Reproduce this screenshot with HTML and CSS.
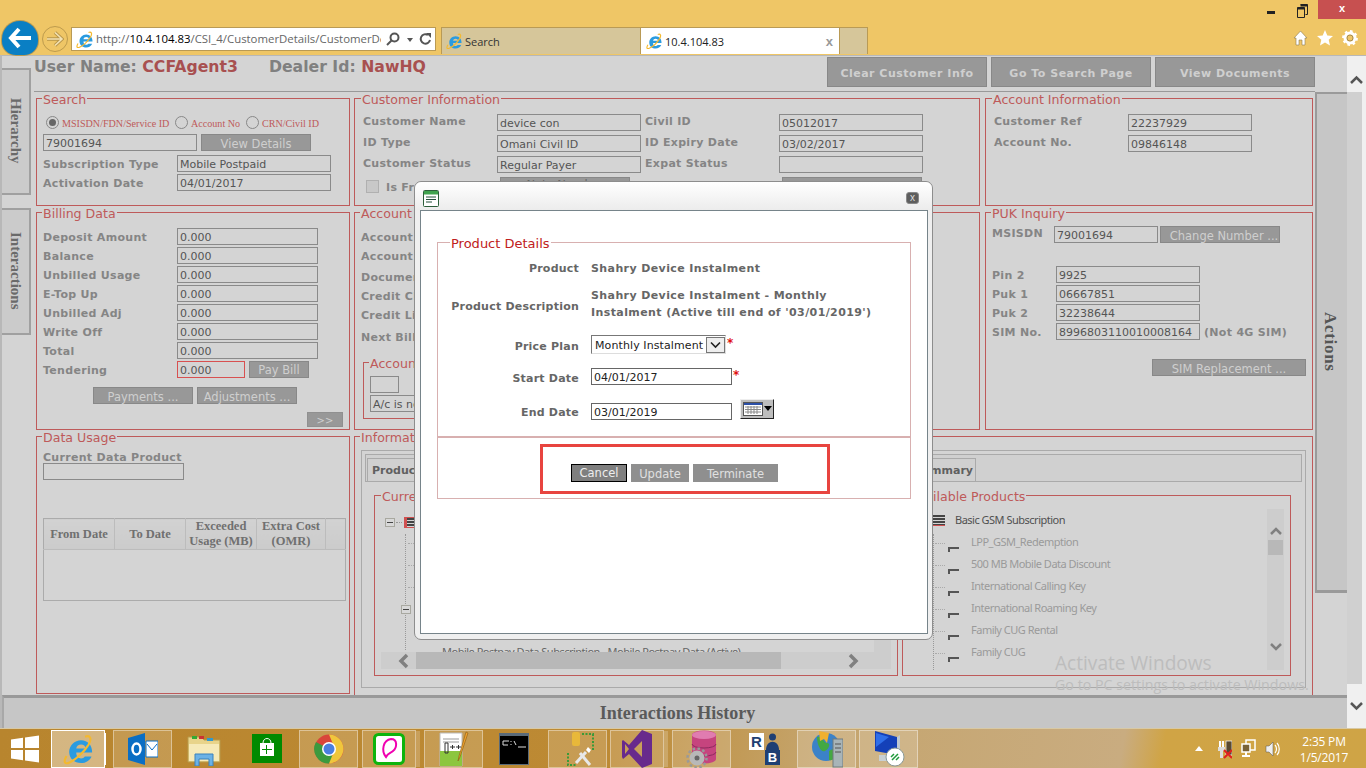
FILE: index.html
```html
<!DOCTYPE html>
<html lang="en">
<head>
<meta charset="utf-8">
<title>Customer Details</title>
<link rel="stylesheet" href="styles.css">
</head>
<body>
<div class="screen">
  <header class="chrome">
    <div class="winbar">
      <svg class="win-ic" width="10" height="4" viewBox="0 0 10 4"><rect x="1" y="0" width="8" height="3" fill="#222"/></svg>
      <svg class="win-ic win-max" width="11" height="14" viewBox="0 0 11 14"><path d="M3.500 .5h7v10h-2M.5 3.500h7v10h-7z" fill="none" stroke="#222"/><path d="M.5 3.500h7v2h-7zM3.500 .5h7v2h-7z" fill="#222"/></svg>
      <div class="win-close">x</div>
    </div>
    <div class="navbar">
      <div class="back"><svg width="24" height="22" viewBox="0 0 24 22"><path d="M11 2 3 11l8 9M3.500 11H23" fill="none" stroke="#fff" stroke-width="4"/></svg></div>
      <div class="fwd"><svg width="18" height="16" viewBox="0 0 18 16"><path d="M9 1.500 16 8l-7 6.500M16 8H1" fill="none" stroke="#B8964A" stroke-width="3.400"/><path d="M9 1.500 16 8l-7 6.500M16 8H1" fill="none" stroke="#F3E2B4" stroke-width="1.600"/></svg></div>
      <div class="addr">
        <svg class="ie" width="17" height="17" viewBox="0 0 34 34"><use href="#ie-mark"/></svg>
        <div class="url">http://<b>10.4.104.83</b>/CSI_4/CustomerDetails/CustomerDe</div>
        <svg class="ic-search" width="14" height="14" viewBox="0 0 14 14"><circle cx="8.500" cy="5.500" r="4" fill="none" stroke="#555" stroke-width="2"/><path d="M5.500 8.500 1 13" stroke="#555" stroke-width="2"/></svg>
        <span class="caret"></span>
        <svg class="ic-refresh" width="13" height="14" viewBox="0 0 13 14"><path d="M11 8a4.700 4.700 0 1 1-2-5" fill="none" stroke="#555" stroke-width="2"/><path d="M7 1h5v5z" fill="#555"/></svg>
      </div>
      <div class="tabs">
        <div class="tab"><svg width="16" height="16" viewBox="0 0 34 34"><use href="#ie-mark"/></svg><span>Search</span></div>
        <div class="tab tab-on"><svg width="16" height="16" viewBox="0 0 34 34"><use href="#ie-mark"/></svg><span>10.4.104.83</span><i class="tab-x">x</i></div>
        <div class="tab tab-new"></div>
      </div>
      <div class="tools">
        <svg width="15" height="16" viewBox="0 0 15 16"><path d="M7.500 1 14 8h-2v7H9v-5H6v5H3V8H1z" fill="#fff" stroke="#8a7a50" stroke-width=".6"/></svg>
        <svg width="16" height="16" viewBox="0 0 16 16"><path d="m8 0 2.300 5.400 5.700.5-4.300 3.800 1.300 5.800L8 12.500 3 15.500l1.300-5.800L0 5.900l5.700-.5z" fill="#fff"/></svg>
        <svg width="16" height="16" viewBox="0 0 16 16"><circle cx="8" cy="8" r="5" fill="none" stroke="#fff" stroke-width="3" /><circle cx="8" cy="8" r="6.800" fill="none" stroke="#fff" stroke-width="2.200" stroke-dasharray="2.600 2.700"/><circle cx="8" cy="8" r="3" fill="none" stroke="#7a6a40" stroke-width=".6"/></svg>
      </div>
    </div>
  </header>

  <main class="page">
    <div class="page-main">
      <div class="upper">
        <nav class="rail">
          <div class="side-tab"><span class="vtext">Hierarchy</span></div>
          <div class="side-tab"><span class="vtext">Interactions</span></div>
        </nav>
        <div class="content">
          <div class="head">
            <div class="who">User Name: <em>CCFAgent3</em><span class="who-gap"></span>Dealer Id: <em>NawHQ</em></div>
            <div class="head-btns">
              <button class="btn btn-top">Clear Customer Info</button>
              <button class="btn btn-top">Go To Search Page</button>
              <button class="btn btn-top">View Documents</button>
            </div>
          </div>
          <div class="grid">
            <section class="panel p-search">
              <h2 class="legend legend-a">Search</h2>
              <div class="radios">
                <span class="radio radio-on"></span><span class="rlabel rl1">MSISDN/FDN/Service ID</span>
                <span class="radio"></span><span class="rlabel rl2">Account No</span>
                <span class="radio"></span><span class="rlabel">CRN/Civil ID</span>
              </div>
              <div class="line"><div class="inp w154">79001694</div><button class="btn w110">View Details</button></div>
              <div class="line mt4"><span class="lbl l134">Subscription Type</span><div class="inp w154">Mobile Postpaid</div></div>
              <div class="line mt2"><span class="lbl l134">Activation Date</span><div class="inp w154">04/01/2017</div></div>
            </section>

            <section class="panel p-cust">
              <h2 class="legend">Customer Information</h2>
              <div class="cust-grid">
                <span class="lbl">Customer Name</span><div class="inp">device con</div><span class="lbl">Civil ID</span><div class="inp">05012017</div>
                <span class="lbl">ID Type</span><div class="inp">Omani Civil ID</div><span class="lbl">ID Expiry Date</span><div class="inp">03/02/2017</div>
                <span class="lbl">Customer Status</span><div class="inp">Regular Payer</div><span class="lbl">Expat Status</span><div class="inp"></div>
              </div>
              <div class="line cust-foot">
                <span class="check"></span><span class="lbl l114">Is Free</span>
                <button class="btn w130 btn-up">Note Number</button>
                <button class="btn w140 ml152"></button>
              </div>
            </section>

            <section class="panel p-acct">
              <h2 class="legend">Account Information</h2>
              <div class="acct-grid">
                <span class="lbl">Customer Ref</span><div class="inp">22237929</div>
                <span class="lbl">Account No.</span><div class="inp">09846148</div>
              </div>
            </section>

            <section class="panel p-bill">
              <h2 class="legend legend-a">Billing Data</h2>
              <div class="bill-grid">
                <span class="lbl">Deposit Amount</span><div class="inp">0.000</div>
                <span class="lbl">Balance</span><div class="inp">0.000</div>
                <span class="lbl">Unbilled Usage</span><div class="inp">0.000</div>
                <span class="lbl">E-Top Up</span><div class="inp">0.000</div>
                <span class="lbl">Unbilled Adj</span><div class="inp">0.000</div>
                <span class="lbl">Write Off</span><div class="inp">0.000</div>
                <span class="lbl">Total</span><div class="inp">0.000</div>
                <span class="lbl">Tendering</span>
                <div class="line"><div class="inp inp-red">0.000</div><button class="btn w60">Pay Bill</button></div>
              </div>
              <div class="bill-btns"><button class="btn w100">Payments ...</button><button class="btn w100">Adjustments ...</button></div>
              <div class="bill-more"><button class="btn btn-more">&gt;&gt;</button></div>
            </section>

            <section class="panel p-acc2">
              <h2 class="legend legend-a">Account Details</h2>
              <div class="acc2-list">
                <span class="lbl">Account Type</span>
                <span class="lbl">Account Status</span>
                <span class="lbl mt2">Document No</span>
                <span class="lbl">Credit Class</span>
                <span class="lbl">Credit Limit</span>
                <span class="lbl mt3">Next Bill Date</span>
              </div>
              <div class="panel acc-sub">
                <h2 class="legend legend-a">Account Status</h2>
                <div class="inp w29"></div>
                <div class="inp w200 mt2">A/c is not barred</div>
              </div>
            </section>

            <section class="panel p-puk">
              <h2 class="legend legend-a">PUK Inquiry</h2>
              <div class="line puk-top"><span class="lbl l62">MSISDN</span><div class="inp w104">79001694</div><button class="btn w120">Change Number ...</button></div>
              <div class="puk-grid">
                <span class="lbl">Pin 2</span><div class="inp">9925</div><span></span>
                <span class="lbl">Puk 1</span><div class="inp">06667851</div><span></span>
                <span class="lbl">Puk 2</span><div class="inp">32238644</div><span></span>
                <span class="lbl">SIM No.</span><div class="inp">8996803110010008164</div><span class="lbl note">(Not 4G SIM)</span>
              </div>
              <div class="puk-sim"><button class="btn w154">SIM Replacement ...</button></div>
            </section>

            <section class="panel p-data">
              <h2 class="legend legend-a">Data Usage</h2>
              <span class="lbl lbl-block">Current Data Product</span>
              <div class="inp w141"></div>
              <table class="dtable">
                <thead><tr><th>From Date</th><th>To Date</th><th>Exceeded Usage (MB)</th><th>Extra Cost (OMR)</th><th></th></tr></thead>
                <tbody><tr><td colspan="5"></td></tr></tbody>
              </table>
            </section>

            <section class="panel p-info">
              <h2 class="legend legend-a">Information</h2>
              <div class="tabbox">
                <div class="tabstrip">
                  <div class="strip-tab">Products</div>
                  <div class="strip-tab strip-end">Summary</div>
                </div>
                <div class="prod-row">
                  <div class="panel p-cur">
                    <h2 class="legend">Current Products</h2>
                    <div class="cur-body">
                      <div class="cur-view">
                        <div class="cur-tree">
                          <div class="t-head"><span class="minus"></span><span class="dots-h"></span><span class="prod-ic"></span></div>
                          <div class="t-stem">
                            <span class="twig"></span><span class="twig"></span><span class="twig"></span>
                            <span class="minus minus-2"></span>
                          </div>
                          <div class="t-last">Mobile Postpay Data Subscription - Mobile Postpay Data (Active)</div>
                        </div>
                        <div class="cur-vbar"></div>
                      </div>
                      <div class="hbar">
                        <svg class="chev" width="14" height="16" viewBox="0 0 14 16"><path d="M10 2 4 8l6 6" fill="none" stroke="#808080" stroke-width="3.500"/></svg>
                        <span class="hthumb"></span>
                        <svg class="chev" width="14" height="16" viewBox="0 0 14 16"><path d="m4 2 6 6-6 6" fill="none" stroke="#808080" stroke-width="3.500"/></svg>
                      </div>
                    </div>
                  </div>
                  <div class="panel p-avail">
                    <h2 class="legend">Available Products</h2>
                    <div class="avail-body">
                      <ul class="tree">
                        <li class="t-root"><span class="prod-ic2"></span>Basic GSM Subscription</li>
                        <li class="leaf">LPP_GSM_Redemption</li>
                        <li class="leaf">500 MB Mobile Data Discount</li>
                        <li class="leaf">International Calling Key</li>
                        <li class="leaf">International Roaming Key</li>
                        <li class="leaf">Family CUG Rental</li>
                        <li class="leaf">Family CUG</li>
                      </ul>
                      <div class="vbar">
                        <svg width="14" height="10" viewBox="0 0 14 10"><path d="m2 8 5-5 5 5" fill="none" stroke="#808080" stroke-width="2.500"/></svg>
                        <span class="vthumb"></span>
                        <svg class="vdown" width="14" height="10" viewBox="0 0 14 10"><path d="m2 2 5 5 5-5" fill="none" stroke="#808080" stroke-width="2.500"/></svg>
                      </div>
                    </div>
                  </div>
                </div>
              </div>
            </section>
          </div>
        </div>
        <aside class="actions"><span class="vtext vtext-a">Actions</span></aside>
      </div>
      <div class="history">Interactions History</div>
    </div>
    <div class="pagebar">
      <div class="pb-end"><svg width="15" height="10" viewBox="0 0 15 10"><path d="m2 8 5.500-5.500L13 8" fill="none" stroke="#555" stroke-width="2.500"/></svg></div>
      <div class="pb-thumb"></div>
      <div class="pb-end pb-down"><svg width="15" height="10" viewBox="0 0 15 10"><path d="m2 2 5.500 5.500L13 2" fill="none" stroke="#555" stroke-width="2.500"/></svg></div>
    </div>
  </main>

  <footer class="taskbar">
    <svg class="start" width="30" height="30" viewBox="0 0 30 30"><path d="M1 5.500 13 3.800V14H1zM15 3.500 29 1.500V14H15zM1 16h12v10.300L1 24.500zM15 16h14v12.500L15 26.500z" fill="#fff"/></svg>
    <div class="task t-ie on"><svg width="30" height="32" viewBox="0 0 34 34"><use href="#ie-mark"/></svg></div>
    <div class="task t-ol"><svg width="30" height="34" viewBox="0 0 30 34"><path d="M0 6 17 1v32L0 28z" fill="#0A6EC4"/><path d="M18 9h12v16H18z" fill="#fff" stroke="#0A6EC4"/><path d="m19 12 5 6 5-6" fill="none" stroke="#0A6EC4"/><ellipse cx="8.500" cy="17" rx="4" ry="5.500" fill="none" stroke="#fff" stroke-width="2.500"/></svg></div>
    <div class="plain t-ex"><svg width="34" height="34" viewBox="0 0 34 34"><path d="M1 5h14l2 3h16v22H1z" fill="#E8D48A" stroke="#B79A4A"/><path d="M2 12h30v17H2z" fill="#F6EAB8"/><rect x="5" y="4" width="5" height="3" fill="#3A3"/><rect x="12" y="4" width="5" height="3" fill="#C33"/><rect x="20" y="6" width="6" height="3" fill="#39C"/><path d="M8 22h18v12h-4v-7H12v7H8z" fill="#6BB2E6" stroke="#3A82BC"/></svg></div>
    <div class="plain t-st"><svg width="30" height="29" viewBox="0 0 30 29"><rect width="30" height="29" fill="#008A00"/><path d="M8 9h14v13H8z" fill="#fff"/><path d="M11 9c0-6 8-6 8 0" fill="none" stroke="#fff"/><path d="M14.500 11v9M10 15.500h10" stroke="#008A00"/></svg></div>
    <div class="task t-ch"><svg width="30" height="40" viewBox="0 0 30 40"><circle cx="15" cy="20" r="14.500" fill="#D9453A"/><path d="M15 20 2 13A14.500 14.500 0 0 0 15 34.500l4-5z" fill="#3C9A3E"/><path d="M15 5.500A14.500 14.500 0 0 1 29.500 20c0 6-5 14.500-14.500 14.500L21 20z" fill="#F0C63C"/><circle cx="15" cy="20" r="7" fill="#fff"/><circle cx="15" cy="20" r="5.500" fill="#4A7FE0"/></svg></div>
    <div class="task t-qu"><svg width="32" height="32" viewBox="0 0 32 32"><rect x="1.500" y="1.500" width="29" height="29" rx="4" fill="#fff" stroke="#0DB40D" stroke-width="3"/><path d="M13 24c-5-6-3-17 5-18 7 0 6 9 2 12-2 2-5 2-7 6z" fill="none" stroke="#F000B0" stroke-width="2"/></svg></div>
    <div class="task t-np"><svg width="32" height="36" viewBox="0 0 32 36"><path d="M2 2h22v33H2z" fill="#fff" stroke="#bbb"/><path d="M2 20h22v15H2z" fill="#8CC63F"/><path d="M5 8h16M5 11h16" stroke="#999"/><path d="M7 12v10h3V12z" fill="none" stroke="#333"/><path d="M12 16h5M14.500 14v4M18 16h5M20.500 14v4" stroke="#333"/><path d="m30 2-8 24-2 4 1-5 7-24z" fill="#F2A32E" stroke="#8a5a10" stroke-width=".6"/></svg></div>
    <div class="plain t-cm"><svg width="30" height="32" viewBox="0 0 30 32"><rect width="30" height="32" fill="#5A6A78"/><rect x="1" y="3" width="28" height="28" fill="#000"/><path d="M4 8h6M4 8v4h5M12 8v1M12 11v1M15 8l2 4M19 14h8" stroke="#ddd"/></svg></div>
    <div class="task t-ss"><svg width="32" height="40" viewBox="0 0 32 40"><rect x="10" y="3" width="8" height="14" rx="2" fill="#E8B83A"/><path d="M20 5h12M31 5v17M6 24v12h8" stroke="#3A9A3A" stroke-width="2" stroke-dasharray="2 1.500" fill="none"/><path d="m14 34 10-11M28 36 18 24" stroke="#E8E8E8" stroke-width="3"/><path d="m26 18 3 3-2 3-3-3z" fill="#fff"/></svg></div>
    <div class="task t-vs"><svg width="30" height="38" viewBox="0 0 30 38"><path d="M20 0 30 4v30l-10 4L7 24l-6 5-1-2V11l1-1 6 5zM20 11l-8 8 8 8zM3 14v10l4-5z" fill="#682A8C"/></svg></div>
    <div class="task t-db"><svg width="32" height="38" viewBox="0 0 32 38"><path d="M6 5a12 4.500 0 0 1 24 0v24a12 4.500 0 0 1-24 0z" fill="#C6447E"/><ellipse cx="18" cy="5" rx="12" ry="4" fill="#E07CB0"/><path d="M6 14a12 4 0 0 0 24 0M6 22a12 4 0 0 0 24 0" fill="none" stroke="#8E2A5E"/><circle cx="11" cy="28" r="7.500" fill="#B8B8B8"/><circle cx="11" cy="28" r="9.500" fill="none" stroke="#999" stroke-width="2.500" stroke-dasharray="2.500 2.500"/><circle cx="11" cy="28" r="2.500" fill="#666"/></svg></div>
    <div class="plain t-rb"><div class="rb"><span class="rb-r">R</span><svg width="13" height="17" viewBox="0 0 13 17"><circle cx="6.500" cy="4" r="3.500" fill="#1F3F73"/><path d="M0 17c0-11 13-11 13 0z" fill="#1F3F73"/></svg></div><span class="rb-b">B</span></div>
    <div class="task t-gl"><svg width="32" height="40" viewBox="0 0 32 40"><circle cx="15" cy="18" r="14" fill="#3B82C8"/><path d="M6 8c6-2 6 6 10 6s2 6-2 8-8-6-8-14zM18 22c4-3 8-2 8 2s-4 8-8 7z" fill="#43A843"/><path d="m8 2 10 2-2 10-3-4-4 2z" fill="#F0B030"/><rect x="22" y="10" width="10" height="28" fill="#A8B4B8" stroke="#6E7A7E"/><path d="M24 15h6M24 19h6M24 23h6" stroke="#555"/></svg></div>
    <div class="task t-rd"><svg width="32" height="40" viewBox="0 0 32 40"><path d="M2 2 24 8v18L2 22z" fill="#1440B8"/><path d="M3 4 16 8 3 18z" fill="#2F6EE8"/><path d="M24 8l3-2v19l-3 2z" fill="#BFC8D0"/><path d="M6 26h14v6H6z" fill="#C8D0D4"/><circle cx="22" cy="28" r="9" fill="#fff" stroke="#8a9a9a"/><path d="m18 28 3-3M26 28l-3 3M19 31l6-6" stroke="#1E9A3A" stroke-width="1.500"/></svg></div>
    <div class="tray">
      <span class="tray-up"></span>
      <svg width="15" height="20" viewBox="0 0 15 20"><path d="M2 2h2v6H2zM5 2h2v6H5z" fill="#fff"/><path d="M1 8h7v4H1zM3 12h3v7H3z" fill="#ddd"/><rect x="9" y="2" width="6" height="14" fill="#5a4a30" stroke="#fff" stroke-width=".7"/><path d="m7 11 8 8M15 11l-8 8" stroke="#E02020" stroke-width="2"/></svg>
      <svg width="15" height="20" viewBox="0 0 15 20"><path d="M5 1h9v10H5z" fill="none" stroke="#fff" stroke-width="1.500"/><path d="M1 5h8v8H1z" fill="#7a6236" stroke="#fff" stroke-width="1.500"/><path d="M5 13v3M1 17h8" stroke="#fff" stroke-width="2"/></svg>
      <svg width="15" height="18" viewBox="0 0 15 18"><path d="M1 6h3l4-4v14l-4-4H1z" fill="#eee" stroke="#555" stroke-width=".5"/><path d="M10 5c2 2 2 6 0 8M12 3c3 3 3 9 0 12" fill="none" stroke="#fff" stroke-width="1.200"/></svg>
      <div class="clock"><div>2:35 PM</div><div>1/5/2017</div></div>
    </div>
  </footer>

  <div class="watermark">
    <div class="wm1">Activate Windows</div>
    <div class="wm2">Go to PC settings to activate Windows.</div>
  </div>

  <div class="modal" role="dialog">
    <div class="modal-bar">
      <svg width="16" height="17" viewBox="0 0 16 17"><rect x=".5" y=".5" width="15" height="16" rx="1" fill="#fff" stroke="#2C5E3A"/><rect x="1" y="1" width="14" height="3.500" fill="#3FA34D"/><path d="M3 7h10M3 9.500h10M3 12h6" stroke="#24503A"/></svg>
      <span class="modal-x">x</span>
    </div>
    <div class="modal-body">
      <div class="mset">
        <h2 class="mlegend">Product Details</h2>
        <div class="mform">
          <div class="mrow mr1"><span class="mlbl">Product</span><span class="mval">Shahry Device Instalment</span></div>
          <div class="mrow mr2"><span class="mlbl">Product Description</span><span class="mval mdesc">Shahry Device Instalment - Monthly Instalment (Active till end of '03/01/2019')</span></div>
          <div class="mrow mr3"><span class="mlbl">Price Plan</span><div class="msel"><span>Monthly Instalment</span><i class="msel-btn"><svg width="11" height="8" viewBox="0 0 11 8"><path d="m1 1.500 4.500 4.500L10 1.500" fill="none" stroke="#222" stroke-width="1.600"/></svg></i></div><span class="star">*</span></div>
          <div class="mrow mr4"><span class="mlbl">Start Date</span><div class="minp">04/01/2017</div><span class="star star-2">*</span></div>
          <div class="mrow mr5"><span class="mlbl">End Date</span><div class="minp">03/01/2019</div>
            <div class="cal"><svg width="20" height="14" viewBox="0 0 20 14"><rect x=".5" y=".5" width="19" height="13" fill="#fff" stroke="#555"/><rect x="1" y="1" width="18" height="2" fill="#2B4FA8"/><path d="M2 5h16M2 7.500h16M2 10h16M5 4v8M8 4v8M11 4v8M14 4v8" stroke="#8a8a8a"/></svg><svg width="8" height="5" viewBox="0 0 8 5"><path d="M0 0h8L4 5z" fill="#000"/></svg></div>
          </div>
        </div>
        <div class="mfoot">
          <div class="redbox">
            <button class="mbtn mbtn-on">Cancel</button>
            <button class="mbtn w58">Update</button>
            <button class="mbtn w85">Terminate</button>
          </div>
        </div>
      </div>
    </div>
  </div>

  <svg class="defs" width="0" height="0" aria-hidden="true"><defs>
    <g id="ie-mark">
      <path d="M24.500 21h8.500c.4-8-5-14-12.500-14C13 7 7 13 7 20.500S13 33 20.500 33c5.500 0 10-3 11.800-7.500h-7.500c-1 1.500-2.500 2.200-4.300 2.200-3.300 0-5.500-2.600-5.500-6.700zM15 16.500c.4-2.800 2.600-4.500 5.500-4.500s5 1.700 5.200 4.500z" fill="#2A9BE0"/>
      <path d="M4 25C0 32 2 35 8 32c7-3.500 16-12 21-20 4-7 2-11-4-9" fill="none" stroke="#F4B92E" stroke-width="2.400"/>
    </g>
  </defs></svg>
</div>
</body>
</html>
```
FILE: styles.css
```css
* { box-sizing: border-box; }
html, body { margin: 0; padding: 0; }
body { width: 1366px; height: 768px; overflow: hidden; background: #d4d4d4; font-family: "DejaVu Sans", Verdana, sans-serif; }
button { font-family: inherit; margin: 0; }
h2, ul { margin: 0; padding: 0; font-weight: normal; }
.defs { position: absolute; }

.screen { position: relative; width: 1366px; height: 768px; display: flex; flex-direction: column; overflow: hidden; }

/* browser chrome */
.chrome { height: 55px; flex: none; background: #efc666; display: flex; flex-direction: column; }
.winbar { height: 27px; display: flex; justify-content: flex-end; align-items: flex-start; }
.win-ic { margin-top: 11px; margin-right: 21px; }
.win-max { margin-top: 4px; margin-right: 10px; }
.win-close { width: 48px; height: 19px; background: #c75050; color: #fff; text-align: center; font: bold 11px/17px "Liberation Sans", sans-serif; }
.navbar { height: 28px; display: flex; position: relative; }
.back { position: absolute; left: 2px; top: -6px; width: 36px; height: 34px; border-radius: 18px 18px 14px 14px; background: #0a7fc4; display: flex; align-items: center; justify-content: center; box-shadow: 0 0 0 1px #b69a55; }
.fwd { position: absolute; left: 42px; top: -1px; width: 26px; height: 26px; border-radius: 50%; border: 1px solid #bd9b4d; display: flex; align-items: center; justify-content: center; }
.addr { margin-left: 71px; width: 365px; height: 24px; background: #fff; border: 1px solid #b99a55; display: flex; align-items: center; position: relative; }
.ie { margin-left: 4px; flex: none; }
.url { margin-left: 3px; width: 285px; flex: none; overflow: hidden; white-space: nowrap; font: 11.400px/20px "Open Sans", sans-serif; color: #666; }
.url b { font-weight: 400; color: #000; }
.ic-search { margin-left: 5px; flex: none; }
.caret { width: 0; height: 0; border: 3px solid transparent; border-top: 4px solid #555; margin: 4px 0 0 7px; flex: none; }
.ic-refresh { margin-left: 6px; flex: none; }
.tabs { margin-left: 5px; width: 427px; height: 27px; display: flex; }
.tab { width: 200px; height: 27px; background: #d6c69a; border: 1px solid #b99a55; border-bottom: 0; display: flex; align-items: center; gap: 3px; padding-left: 4px; font: 11px "Open Sans", sans-serif; color: #333; }
.tab + .tab { border-left: 0; }
.tab-on { width: 199px; background: #fff; padding-left: 5px; color: #222; position: relative; }
.tab-x { position: absolute; right: 6px; top: 6px; font: bold 13px "Liberation Sans", sans-serif; color: #999; }
.tab-new { width: 28px; padding: 0; }
.tools { margin-left: auto; display: flex; gap: 9px; padding: 3px 8px 0 0; }

/* page */
.page { height: 673px; flex: none; display: flex; border-top: 1px solid #b8b8b8; background: #d4d4d4; }
.page-main { width: 1347px; flex: none; display: flex; flex-direction: column; border-left: 2px solid #b8b8b8; }
.upper { height: 639px; flex: none; display: flex; overflow: hidden; }
.rail { width: 32px; flex: none; padding-top: 12px; display: flex; flex-direction: column; gap: 13px; }
.side-tab { width: 29px; height: 127px; background: #cbcbcb; border: 2px solid #a0a0a0; border-left: 0; display: flex; align-items: flex-start; justify-content: center; padding-top: 28px; }
.side-tab + .side-tab { padding-top: 22px; }
.vtext { writing-mode: vertical-rl; font: bold 15px "Liberation Serif", serif; color: #6a6a6a; }

.content { width: 1281px; flex: none; }
.head { height: 36px; border-bottom: 1px solid #999; display: flex; justify-content: space-between; }
.who { font-size: 15.700px; font-weight: bold; color: #808080; line-height: 20px; margin-top: 1px; white-space: nowrap; }
.who em { font-style: normal; color: #a85050; }
.who-gap { display: inline-block; width: 31px; }
.head-btns { display: flex; gap: 4px; padding-top: 1px; }
.btn { height: 17px; padding: 2px 0 0; border: 1px solid #888; background: #989898; color: #cfcfcf; font-size: 11.500px; line-height: 14px; text-align: center; white-space: nowrap; }
.btn-top { width: 160px; height: 30px; padding-top: 4px; font-weight: bold; font-size: 11px; letter-spacing: .5px; }
.btn-up { padding: 0 0 6px; color: #666; }

.grid { display: grid; grid-template-columns: 314px 626px 329px; grid-template-rows: 108px 218px 270px; column-gap: 4px; row-gap: 6px; margin: 6px 0 0 2px; }
.p-acct { margin-left: 1px; }
.p-puk { margin-left: 1px; }
.panel { position: relative; border: 1px solid #be5a5a; min-width: 0; }
.legend { position: absolute; left: 6px; top: -7px; background: #d4d4d4; padding: 0 1px; font: 12.600px/16px "DejaVu Sans", sans-serif; color: #be5a5a; white-space: nowrap; }
.legend-a { left: 5px; }
.lbl { height: 17px; font-size: 11px; font-weight: bold; color: #858585; line-height: 19px; white-space: nowrap; letter-spacing: .3px; }
.inp { height: 17px; border: 1px solid #8a8a8a; padding-left: 2px; font-size: 11px; line-height: 17px; color: #555; white-space: nowrap; overflow: hidden; }
.line { display: flex; align-items: flex-start; }
.mt2 { margin-top: 2px; }
.mt3 { margin-top: 3px; }
.mt4 { margin-top: 4px; }
.w29 { width: 29px; }
.w60 { width: 60px; }
.w100 { width: 100px; }
.w104 { width: 104px; }
.w110 { width: 110px; margin-left: 4px; }
.w120 { width: 120px; margin-left: 2px; padding-left: 8px; }
.w130 { width: 130px; margin-top: -1px; }
.w140 { width: 140px; margin-top: -1px; }
.w141 { width: 141px; }
.w154 { width: 154px; }
.w200 { width: 200px; }
.l134 { width: 134px; flex: none; }
.l114 { width: 114px; flex: none; }
.l62 { width: 62px; flex: none; line-height: 15px; }
.ml152 { margin-left: 152px; }

/* search */
.p-search { padding: 15px 6px 0; }
.radios { height: 20px; display: flex; align-items: flex-start; margin-left: 3px; font: 10px "Liberation Serif", serif; color: #be5a5a; }
.radio { width: 13px; height: 13px; border: 1px solid #888; border-radius: 50%; margin-top: 2px; flex: none; background: #d4d4d4; position: relative; }
.radio-on::after { content: ""; position: absolute; left: 2px; top: 2px; width: 7px; height: 7px; border-radius: 50%; background: #666; }
.rlabel { margin: 4px 0 0 3px; font-size: 10.100px; white-space: nowrap; width: 58px; }
.rl1 { width: 113px; }
.rl2 { width: 55px; }

/* customer */
.p-cust { padding: 15px 8px 0; }
.cust-grid { display: grid; grid-template-columns: 134px 144px 138px 144px; grid-auto-rows: 17px; row-gap: 4px; }
.cust-grid .lbl:nth-child(4n+3) { padding-left: 4px; }
.cust-grid .lbl, .acct-grid .lbl { line-height: 15px; }
.cust-foot { margin-top: 5px; padding-left: 3px; }
.check { width: 13px; height: 13px; border: 1px solid #b0b0b0; background: #c8c8c8; margin: 2px 7px 0 0; flex: none; }
.p-acct { padding: 15px 8px 0; }
.acct-grid { display: grid; grid-template-columns: 134px 124px; grid-auto-rows: 17px; row-gap: 4px; }

/* billing */
.p-bill { padding: 15px 6px 0; }
.bill-grid { display: grid; grid-template-columns: 134px 141px; grid-auto-rows: 17px; row-gap: 2px; }
.inp-red { width: 68px; border-color: #d85050; }
.bill-grid .btn { margin-left: 4px; padding-top: 0; }
.bill-btns { display: flex; gap: 4px; padding-left: 50px; margin-top: 9px; }
.bill-more { display: flex; justify-content: flex-end; padding: 8px 0 0; }
.btn-more { width: 36px; height: 15px; border: 1px solid #909090; font-size: 10px; line-height: 11px; }

/* account 2 */
.p-acc2 { padding: 15px 6px 0; }
.acc2-list { display: flex; flex-direction: column; gap: 2px; }
.acc-sub { margin: 17px 0 0 2px; width: 400px; height: 57px; padding: 13px 6px 0; }

/* puk */
.p-puk { padding: 13px 6px 0; }
.puk-grid { display: grid; grid-template-columns: 64px 144px auto; justify-content: start; grid-auto-rows: 17px; row-gap: 2px; margin-top: 23px; }
.note { padding-left: 4px; }
.puk-sim { display: flex; justify-content: flex-end; margin-top: 19px; }

/* data usage */
.p-data { padding: 15px 6px 0; height: 258px; }
.lbl-block { display: block; height: 12px; margin-top: -1px; line-height: 14px; }
.dtable { width: 302px; height: 83px; margin-top: 38px; border-collapse: collapse; border: 1px solid #ababab; table-layout: fixed; font: bold 12.500px/15px "Liberation Serif", serif; color: #707070; }
.dtable th { height: 31px; border-right: 1px solid #bcbcbc; border-bottom: 1px solid #bcbcbc; padding: 0 1px; background: linear-gradient(#d2d2d2, #cbcbcb); width: 71px; font-weight: bold; }
.dtable th:nth-child(4) { width: 69px; }
.dtable th:last-child { width: 20px; border-right: 0; }

/* information */
.p-info { grid-column: 2 / span 2; padding: 13px 6px 0; }
.tabbox { border: 1px solid #aaa; height: 238px; width: 945px; padding: 3px; }
.tabstrip { height: 28px; border: 1px solid #aaa; display: flex; background: #d0d0d0; font-size: 11px; font-weight: bold; color: #606060; padding: 3px 0 0 1px; }
.strip-tab { width: 100px; height: 24px; border: 1px solid #aaa; border-bottom: 0; line-height: 24px; padding-left: 4px; }
.strip-end { margin-left: 362px; width: 147px; text-align: right; padding-right: 2px; border-left: 0; }
.prod-row { display: flex; gap: 4px; margin: 13px 0 0 9px; }
.p-cur { width: 524px; height: 181px; }
.p-avail { width: 389px; height: 181px; }
.cur-body { position: absolute; inset: 13px 6px 6px 6px; display: flex; flex-direction: column; }
.cur-view { height: 143px; display: flex; }
.cur-tree { flex: 1; position: relative; overflow: hidden; padding: 8px 0 0 4px; }
.cur-vbar { width: 17px; background: #cdcdcd; }
.t-head { display: flex; align-items: center; height: 10px; }
.minus { width: 10px; height: 9px; border: 1px solid #a8a8a0; background: #d8d8d8; position: relative; flex: none; }
.minus::after { content: ""; position: absolute; left: 1px; right: 1px; top: 3px; height: 1px; background: #444; }
.dots-h { width: 6px; border-top: 1px dotted #999; margin: 0 2px 0 1px; }
.prod-ic { width: 12px; height: 11px; flex: none; border: 1px solid #d05050; border-left-width: 3px; background: repeating-linear-gradient(#444 0 2px, #d4d4d4 2px 3px); }
.t-stem { position: relative; margin: 7px 0 0 20px; width: 10px; height: 116px; border-left: 1px dotted #999; padding-top: 9px; }
.twig { display: block; width: 6px; height: 22px; margin-left: 2px; border-top: 1px dotted #aaa; }
.minus-2 { position: absolute; left: -5px; top: 71px; }
.t-last { position: absolute; left: 61px; bottom: -8px; height: 16px; font: 11px/16px "Noto Sans", sans-serif; letter-spacing: -.5px; color: #666; white-space: nowrap; }
.hbar { height: 17px; display: flex; align-items: center; background: #cdcdcd; padding-left: 16px; }
.hthumb { width: 365px; height: 17px; background: #b8b8b8; margin: 0 65px 0 5px; flex: none; }
.avail-body { position: absolute; inset: 13px 6px 5px 0; display: flex; }
.tree { flex: 1; list-style: none; font: 11px/22px "Noto Sans", sans-serif; letter-spacing: -.5px; color: #9a9a9a; white-space: nowrap; position: relative; }
.tree::after { content: ""; position: absolute; left: 30px; top: 25px; bottom: 0; border-left: 1px dotted #999; }
.tree li { height: 22px; position: relative; }
.t-root { padding-left: 52px; color: #505050; }
.prod-ic2 { position: absolute; left: 30px; top: 6px; width: 12px; height: 11px; border-bottom: 1px solid #d05050; background: repeating-linear-gradient(#444 0 2px, #d4d4d4 2px 3px); }
.leaf { padding-left: 68px; }
.leaf::before { content: ""; position: absolute; left: 32px; top: 12px; width: 10px; border-top: 1px dotted #aaa; }
.leaf::after { content: ""; position: absolute; left: 45px; top: 16px; width: 9px; height: 3px; border-top: 2px solid #555; border-left: 2px solid #555; }
.vbar { width: 17px; background: #cdcdcd; display: flex; flex-direction: column; align-items: center; padding-top: 17px; }
.vthumb { width: 15px; height: 15px; background: #b8b8b8; margin-top: 4px; }
.vdown { margin-top: 87px; }

/* actions + page scrollbar */
.actions { width: 32px; height: 501px; margin-top: 36px; flex: none; margin-left: 0; background: #c6c6c6; border: 2px solid #9a9a9a; border-right: 0; border-bottom-width: 3px; display: flex; align-items: center; justify-content: center; padding-right: 5px; }
.vtext-a { font-size: 17px; letter-spacing: .7px; color: #555; }
.history { height: 33px; flex: none; background: #c6c6c6; border-top: 3px solid #999; border-left: 2px solid #a8a8a8; text-align: center; font: bold 18px/30px "Liberation Serif", serif; color: #5a5a5a; padding-left: 4px; }
.pagebar { width: 19px; flex: none; background: #f0f0f0; display: flex; flex-direction: column; }
.pb-end { height: 36px; display: flex; align-items: flex-end; justify-content: center; padding-bottom: 7px; }
.pb-thumb { height: 592px; background: #d0d0d0; margin-right: 4px; }
.pb-down { align-items: center; padding: 0; height: 44px; }

/* taskbar */
.taskbar { height: 40px; flex: none; position: relative; display: flex; align-items: center; border-top: 1px solid #d8c9a5;
  background: linear-gradient(100deg, #b8852e 0%, #bd8a34 45%, #c5a56e 60%, #c9ac80 82%, #d0a445 85%, #cfa446 100%); }
.start { margin-left: 10px; flex: none; }
.task { height: 38px; flex: none; display: flex; align-items: center; justify-content: center; background: rgba(255,255,255,.16); border: 1px solid rgba(255,255,255,.4); }
.plain { height: 38px; flex: none; display: flex; align-items: center; justify-content: center; }
.t-ie { margin-left: 11px; width: 54px; background: rgba(255,255,255,.4); border: 1px solid #fff; box-shadow: 4px 0 0 -3px #fff; }
.t-ol { margin-left: 8px; width: 59px; }
.t-ex { margin-left: 15px; width: 34px; }
.t-st { margin-left: 31px; width: 30px; }
.t-ch { margin-left: 17px; width: 59px; }
.t-qu { margin-left: 4px; width: 54px; box-shadow: 5px 0 0 -1px rgba(255,255,255,.2); }
.t-np { margin-left: 8px; width: 59px; }
.t-cm { margin-left: 16px; width: 30px; }
.t-ss { margin-left: 19px; width: 59px; }
.t-vs { margin-left: 3px; width: 54px; box-shadow: 5px 0 0 -1px rgba(255,255,255,.2); }
.t-db { margin-left: 8px; width: 59px; }
.t-rb { margin-left: 18px; width: 31px; flex-direction: column; align-items: stretch; }
.rb { display: flex; align-items: flex-end; gap: 2px; }
.rb-r { width: 15px; height: 17px; background: #fff; color: #1f3f73; font: bold 15px/17px "Liberation Sans", sans-serif; text-align: center; }
.rb-b { width: 15px; height: 15px; margin-left: 16px; background: #1f3f73; color: #fff; font: bold 13px/15px "Liberation Sans", sans-serif; text-align: center; }
.t-gl { margin-left: 17px; width: 59px; }
.t-rd { margin-left: 3px; width: 59px; }
.tray { margin-left: auto; display: flex; align-items: center; gap: 9px; padding-right: 14px; }
.tray-up { width: 0; height: 0; border: 4px solid transparent; border-bottom: 5px solid #fff; border-top: 0; margin-right: 5px; }
.clock { width: 70px; margin-left: 0; padding-top: 2px; text-align: center; color: #fff; font: 12px/16px "Open Sans", sans-serif; letter-spacing: -.2px; margin-right: -7px; }

/* watermark */
.watermark { position: absolute; left: 1055px; top: 650px; color: #bdbdbd; font-family: "Open Sans", sans-serif; white-space: nowrap; }
.wm1 { font-size: 19.100px; line-height: 26px; }
.wm2 { font-size: 14.250px; line-height: 18px; }

/* modal */
.modal { position: absolute; left: 414px; top: 181px; width: 519px; height: 459px; background: #efefef; border: 1px solid #8d8d8d; border-radius: 7px; padding: 0 4px 5px 5px; display: flex; flex-direction: column; }
.modal-bar { height: 28px; flex: none; background: linear-gradient(#fff, #ececec); margin: 0 -4px 0 -5px; padding: 8px 13px 0 8px; display: flex; justify-content: space-between; align-items: flex-start; border-radius: 7px 7px 0 0; }
.modal-x { width: 13px; height: 12px; margin-top: 2px; background: #5e5e5e; border: 1px solid #888; border-radius: 3px; color: #ddd; font: 10px/9px "Liberation Sans", sans-serif; text-align: center; }
.modal-body { flex: 1; background: #fff; border: 1px solid #76848a; padding: 31px 16px 0 16px; }
.mset { position: relative; border: 1px solid #d8b0b0; height: 257px; }
.mlegend { position: absolute; left: 12px; top: -8px; background: #fff; padding: 0 1px; font: 13px/17px "DejaVu Sans", sans-serif; color: #c02020; }
.mform { height: 193px; padding-top: 17px; display: flex; flex-direction: column; }
.mrow { display: flex; align-items: center; }
.mlbl { width: 141px; flex: none; text-align: right; font-size: 11px; font-weight: bold; color: #666; margin-right: 12px; letter-spacing: .22px; white-space: nowrap; }
.mval { font-size: 11px; font-weight: bold; color: #666; line-height: 17px; letter-spacing: .4px; }
.mdesc { width: 295px; }
.mr1 { height: 16px; }
.mr2 { height: 35px; margin-top: 10px; }
.mr2 .mlbl { margin-top: 5px; }
.mr3 { height: 20px; margin-top: 14px; align-items: flex-start; }
.mr3 .mlbl { margin-top: 5px; }
.mr4 { height: 17px; margin-top: 13px; align-items: flex-start; }
.mr4 .mlbl { margin-top: 4px; }
.mr5 { height: 21px; margin-top: 14px; }
.mr5 .mlbl { margin-top: 5px; }
.msel { width: 135px; height: 19px; border: 1px solid #777; border-bottom-color: #ddd; border-right-color: #ddd; display: flex; justify-content: space-between; align-items: center; padding: 1px 0 0 3px; font-size: 11px; color: #222; letter-spacing: .1px; white-space: nowrap; }
.msel-btn { width: 19px; height: 16px; border: 1px solid #777; background: #eee; display: flex; align-items: center; justify-content: center; flex: none; }
.star { color: #e01010; font: bold 12px/12px "DejaVu Sans", sans-serif; margin: 2px 0 0 1px; height: 12px; }
.star-2 { margin-top: 1px; }
.minp { width: 141px; height: 17px; border: 1px solid #666; padding-left: 2px; font-size: 11px; line-height: 17px; color: #222; }
.mr5 .minp { margin-top: 4px; }
.cal { width: 34px; height: 20px; margin: -2px 0 0 8px; background: #bdbdbd; border: 1px solid; border-color: #eee #222 #222 #eee; display: flex; align-items: center; gap: 1px; padding-left: 2px; }
.mfoot { height: 62px; border-top: 2px solid #d8b0b0; padding: 6px 0 0 102px; }
.redbox { width: 290px; height: 50px; border: 3px solid #e8443f; padding: 17px 0 0 28px; display: flex; gap: 4px; align-items: flex-start; }
.mbtn { width: 58px; height: 18px; padding: 2px 0 0; border: 0; background: #8f8f8f; color: #e0e0e0; font-size: 11.500px; line-height: 15px; text-align: center; }
.mbtn-on { width: 56px; border: 1px solid #000; background: #7f7f7f; color: #eee; padding: 0; }
.w58 { width: 58px; }
.w85 { width: 85px; }
```
